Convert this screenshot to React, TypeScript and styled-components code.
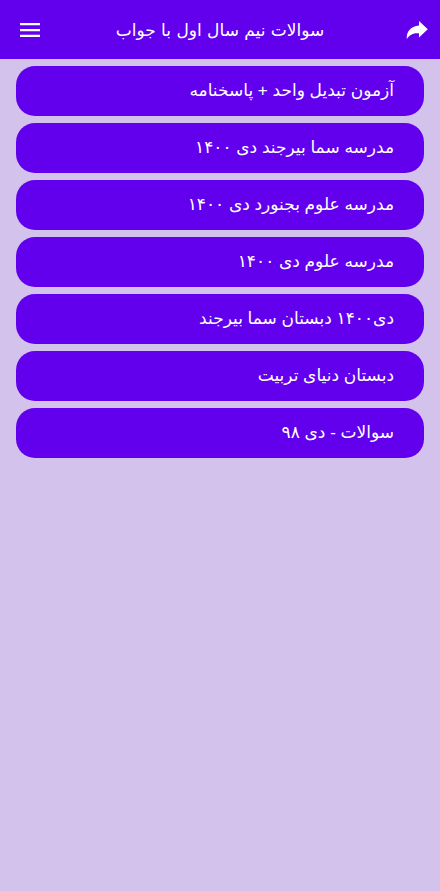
import React from 'react'
import styled, { createGlobalStyle } from 'styled-components';

const GlobalStyle = createGlobalStyle`
  * {
    box-sizing: border-box;
  }
  body {
    margin: 0;
    background-color: #d3c2ec;
    font-family: "Liberation Sans", "DejaVu Sans", sans-serif;
  }
`;

const Header = styled.header`
  display: grid;
  grid-template-columns: 1fr auto 1fr;
  align-items: center;
  height: 59px;
  padding: 0 12px;
  background-color: #6200ee;
  color: #fff;
`;

const Title = styled.h1`
  margin: 0;
  font-family: "DejaVu Sans", sans-serif;
  font-size: 17px;
  line-height: 28px;
  font-weight: 400;
`;

const IconButton = styled.button<{ $end?: boolean }>`
  display: flex;
  justify-self: ${({ $end }) => ($end ? 'end' : 'start')};
  padding: ${({ $end }) => ($end ? '0' : '0 8px')};
  border: 0;
  background: none;
  color: inherit;
  cursor: pointer;
  svg {
    height: 18px;
    fill: currentColor;
  }
`;

const List = styled.nav`
  display: flex;
  flex-direction: column;
  gap: 7px;
  padding: 7px 16px;
`;

const Item = styled.button`
  height: 50px;
  padding: 0 30px;
  border: 0;
  border-radius: 19px;
  background-color: #6200ee;
  color: #fff;
  font-family: inherit;
  font-size: 17px;
  line-height: 28px;
  text-align: right;
  cursor: pointer;
`;

const items = [
  'آزمون تبدیل واحد + پاسخنامه',
  'مدرسه سما بیرجند دی ۱۴۰۰',
  'مدرسه علوم بجنورد دی ۱۴۰۰',
  'مدرسه علوم دی ۱۴۰۰',
  'دی۱۴۰۰ دبستان سما بیرجند',
  'دبستان دنیای تربیت',
  'سوالات - دی ۹۸',
]

function App() {
  return (
    <>
      <GlobalStyle />
      <Header>
        <IconButton aria-label="منو">
          <svg width="20" viewBox="0 0 20 18">
            <path d="M0 2h20v2.300H0zM0 7.900h20v2.300H0zM0 13.800h20v2.300H0z" />
          </svg>
        </IconButton>
        <Title dir="rtl">سوالات نیم سال اول با جواب</Title>
        <IconButton $end aria-label="اشتراک گذاری">
          <svg width="22" viewBox="0 0 22 18">
            <path d="M13 0L21.800 8.300L13 16.500V12.200C7.500 11.800 3.500 13.500 0.800 18C0.200 11 4.500 5.200 13 4.500Z" />
          </svg>
        </IconButton>
      </Header>
      <List dir="rtl">
        {items.map((item) => (
          <Item key={item}>{item}</Item>
        ))}
      </List>
    </>
  )
}

export default App
